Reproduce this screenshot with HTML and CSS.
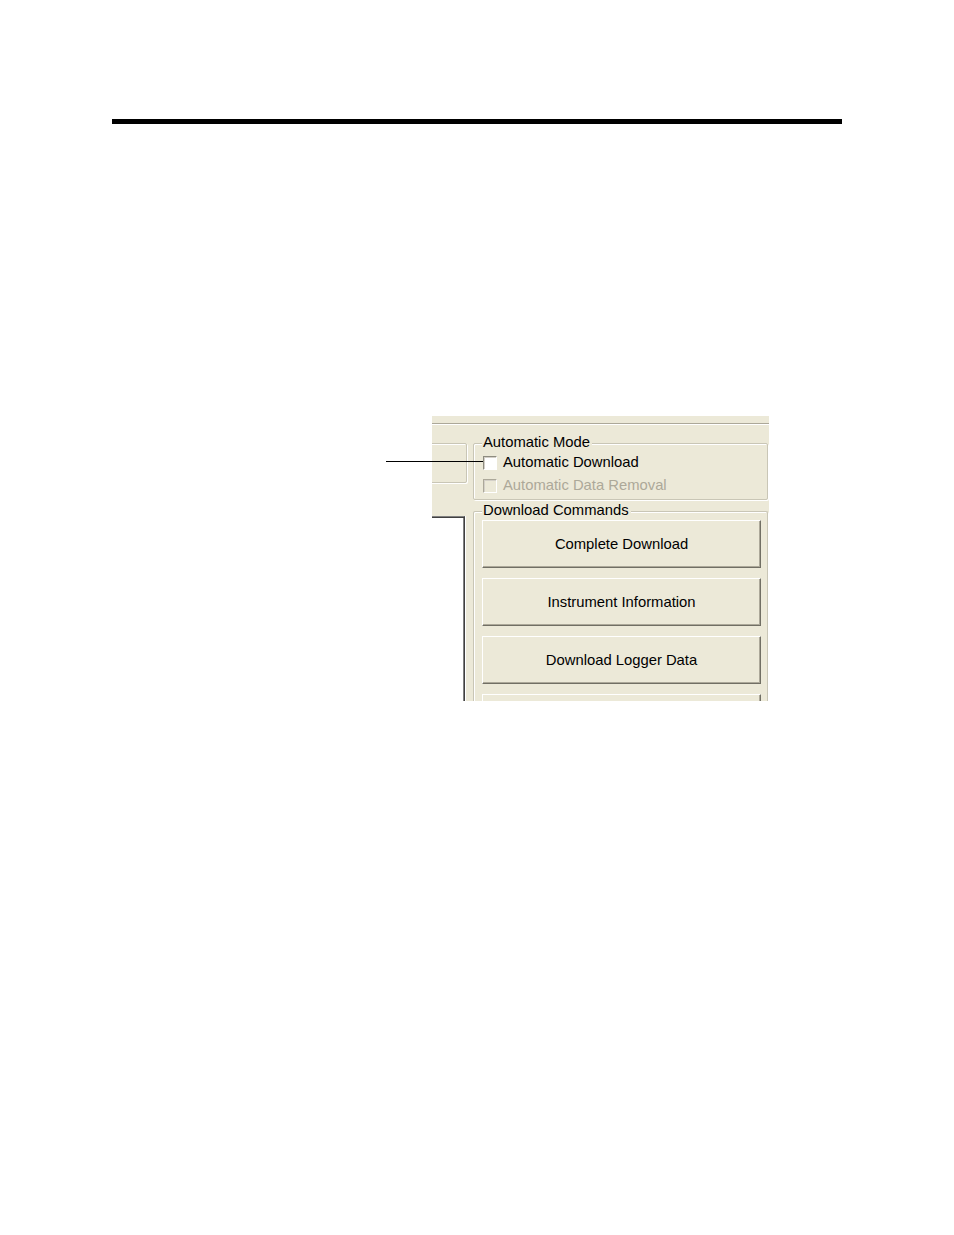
FILE: index.html
```html
<!DOCTYPE html>
<html>
<head>
<meta charset="utf-8">
<link rel="stylesheet" href="styles.css">
</head>
<body>
<div class="page">
  <div class="rule"></div>
  <div class="figure">
    <div class="callout"></div>
    <div class="shot">
      <div class="separator"></div>
      <div class="shot-body">
        <div class="left-col">
          <div class="etched-box left-box"></div>
          <div class="sunken"></div>
        </div>
        <div class="right-col">
          <div class="group auto-mode">
            <span class="legend">Automatic Mode</span>
            <div class="check-row">
              <span class="checkbox"></span>
              <span class="check-label">Automatic Download</span>
            </div>
            <div class="check-row disabled">
              <span class="checkbox"></span>
              <span class="check-label">Automatic Data Removal</span>
            </div>
          </div>
          <div class="group commands">
            <span class="legend">Download Commands</span>
            <div class="buttons">
              <div class="btn">Complete Download</div>
              <div class="btn">Instrument Information</div>
              <div class="btn">Download Logger Data</div>
              <div class="btn"></div>
            </div>
          </div>
        </div>
      </div>
    </div>
  </div>
</div>
</body>
</html>
```

FILE: styles.css
```css
html, body {
  margin: 0;
  padding: 0;
  background: #ffffff;
}

.page {
  width: 954px;
  height: 1235px;
  position: relative;
  overflow: hidden;
  font-family: "Liberation Sans", Arial, sans-serif;
}

.rule {
  margin: 119px 0 0 112px;
  width: 730px;
  height: 5px;
  background: #000000;
}

.figure {
  position: relative;
  margin: 292px 0 0 432px;
  width: 337px;
  height: 285px;
}

.callout {
  position: absolute;
  left: -46px;
  top: 45px;
  width: 97px;
  height: 1px;
  background: #000000;
  z-index: 2;
}

.shot {
  width: 337px;
  height: 285px;
  background: #ece9d8;
  overflow: hidden;
  display: flex;
  flex-direction: column;
}

.separator {
  margin-top: 7px;
  height: 1px;
  background: #aca899;
  border-bottom: 1px solid #ffffff;
  flex: none;
}

.shot-body {
  display: flex;
  margin-top: 18px;
  flex: 1;
  min-height: 0;
}

.left-col {
  width: 36px;
  flex: none;
  display: flex;
  flex-direction: column;
  position: relative;
}

.etched-box {
  border: 1px solid #c9c6b6;
  box-shadow: inset 1px 1px 0 #ffffff, 1px 1px 0 #ffffff;
  border-radius: 2px;
}

.left-box {
  margin-left: -20px;
  height: 38px;
  width: 53px;
  flex: none;
}

.sunken {
  margin-top: 33px;
  margin-left: -20px;
  width: 52px;
  flex: 1;
  border-top: 1px solid #808080;
  border-right: 1px solid #404040;
  box-shadow: inset 0 1px 0 #404040, inset -1px 0 0 #808080, 1px 0 0 #ffffff;
  background: #ffffff;
}

.right-col {
  margin-left: 5px;
  width: 295px;
  flex: none;
  display: flex;
  flex-direction: column;
}

.group {
  position: relative;
  border: 1px solid #c9c6b6;
  box-shadow: inset 1px 1px 0 #ffffff, 1px 1px 0 #ffffff;
  border-radius: 2px;
}

.legend {
  position: absolute;
  left: 8px;
  top: -10px;
  padding: 0 2px 0 1px;
  background: #ece9d8;
  font-size: 14.8px;
  line-height: 17px;
  color: #000000;
  white-space: nowrap;
}

.auto-mode {
  height: 57px;
  flex: none;
  padding: 11px 0 0 9px;
  box-sizing: border-box;
  display: flex;
  flex-direction: column;
  gap: 8px;
}

.check-row {
  display: flex;
  align-items: center;
  gap: 6px;
  height: 15px;
}

.checkbox {
  width: 12px;
  height: 12px;
  flex: none;
  background: #ffffff;
  border-top: 1px solid #8e8c80;
  border-left: 1px solid #8e8c80;
  border-right: 1px solid #ffffff;
  border-bottom: 1px solid #ffffff;
  box-shadow: inset 1px 1px 0 #d4d0c8;
}

.check-label {
  font-size: 14.8px;
  line-height: 17px;
  color: #000000;
  white-space: nowrap;
}

.check-row.disabled .checkbox {
  background: #ece9d8;
  border-top-color: #aca899;
  border-left-color: #aca899;
  box-shadow: inset 1px 1px 0 #d4d0c8;
}

.check-row.disabled .check-label {
  color: #aca899;
}

.commands {
  margin-top: 11px;
  flex: 1;
  padding: 8px 6px 0 8px;
  box-sizing: border-box;
  border-bottom: none;
}

.buttons {
  display: flex;
  flex-direction: column;
  gap: 10px;
}

.btn {
  height: 48px;
  box-sizing: border-box;
  flex: none;
  display: flex;
  align-items: center;
  justify-content: center;
  background: #ece9d8;
  border-top: 1px solid #ffffff;
  border-left: 1px solid #ffffff;
  border-right: 1px solid #716f64;
  border-bottom: 1px solid #716f64;
  box-shadow: inset -1px -1px 0 #aca899;
  font-size: 14.8px;
  color: #000000;
  white-space: nowrap;
}
```
